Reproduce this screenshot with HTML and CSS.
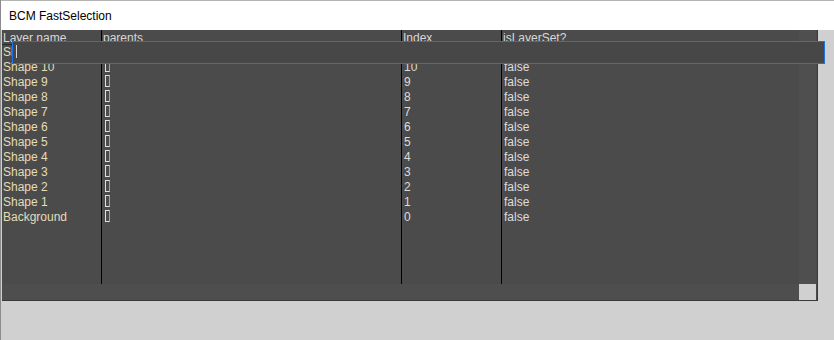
FILE: index.html
```html
<!DOCTYPE html>
<html lang="en">

<head>
    <meta charset="UTF-8">
    <title>BCM FastSelection</title>
    <link rel="stylesheet" href="styles.css">
</head>

<body>
    <div class="window">
        <div class="titlebar">BCM FastSelection</div>

        <div class="panel">
            <div class="grid">
                <div class="col col-name">
                    <div class="head">Layer name</div>
                    <div class="cell">Shape 11</div>
                    <div class="cell">Shape 10</div>
                    <div class="cell">Shape 9</div>
                    <div class="cell">Shape 8</div>
                    <div class="cell">Shape 7</div>
                    <div class="cell">Shape 6</div>
                    <div class="cell">Shape 5</div>
                    <div class="cell">Shape 4</div>
                    <div class="cell">Shape 3</div>
                    <div class="cell">Shape 2</div>
                    <div class="cell">Shape 1</div>
                    <div class="cell">Background</div>
                </div>
                <div class="col col-parents">
                    <div class="head">parents</div>
                    <div class="cell"><span class="box"></span></div>
                    <div class="cell"><span class="box"></span></div>
                    <div class="cell"><span class="box"></span></div>
                    <div class="cell"><span class="box"></span></div>
                    <div class="cell"><span class="box"></span></div>
                    <div class="cell"><span class="box"></span></div>
                    <div class="cell"><span class="box"></span></div>
                    <div class="cell"><span class="box"></span></div>
                    <div class="cell"><span class="box"></span></div>
                    <div class="cell"><span class="box"></span></div>
                    <div class="cell"><span class="box"></span></div>
                    <div class="cell"><span class="box"></span></div>
                </div>
                <div class="col col-index">
                    <div class="head">Index</div>
                    <div class="cell">11</div>
                    <div class="cell">10</div>
                    <div class="cell">9</div>
                    <div class="cell">8</div>
                    <div class="cell">7</div>
                    <div class="cell">6</div>
                    <div class="cell">5</div>
                    <div class="cell">4</div>
                    <div class="cell">3</div>
                    <div class="cell">2</div>
                    <div class="cell">1</div>
                    <div class="cell">0</div>
                </div>
                <div class="col col-set">
                    <div class="head">isLayerSet?</div>
                    <div class="cell">false</div>
                    <div class="cell">false</div>
                    <div class="cell">false</div>
                    <div class="cell">false</div>
                    <div class="cell">false</div>
                    <div class="cell">false</div>
                    <div class="cell">false</div>
                    <div class="cell">false</div>
                    <div class="cell">false</div>
                    <div class="cell">false</div>
                    <div class="cell">false</div>
                    <div class="cell">false</div>
                </div>
            </div>
            <div class="vscroll"></div>
            <div class="hscroll"></div>
            <div class="corner"></div>
        </div>

        <div class="search"><span class="caret"></span></div>
    </div>
</body>

</html>
```

FILE: styles.css
```css
body {
    margin: 0;
    background-color: #d0d0d0;
    font-family: "Liberation Sans", Arial, sans-serif;
    font-size: 12px;
}

.window {
    position: relative;
    width: 834px;
    height: 340px;
    border-left: 1px solid #8c8c8c;
    box-sizing: border-box;
    overflow: hidden;
}

.titlebar {
    height: 28px;
    padding-top: 1px;
    line-height: 29px;
    padding-left: 8px;
    background-color: #fff;
    border-top: 1px solid #b4b4b4;
    color: #000;
}

.panel {
    display: grid;
    grid-template-columns: 797px 17px;
    grid-template-rows: 254px 16px;
    width: 815px;
    margin-left: 1px;
    background-color: #4b4b4b;
    border-right: 1px solid #3a3a3a;
    border-bottom: 1px solid #3a3a3a;
}

.grid {
    display: flex;
    overflow: hidden;
}

.col {
    border-right: 1px solid #000;
}

.col-name {
    width: 99px;
    color: #e4ddb6;
}

.col-parents {
    width: 299px;
}

.col-index {
    width: 99px;
    color: #dcdcdc;
}

.col-set {
    flex: 1;
    border-right: none;
    color: #dcdcdc;
}

.head {
    height: 14px;
    line-height: 16px;
    padding-left: 1px;
    color: #d8d8d8;
    border-bottom: 1px solid #2a2a2a;
    overflow: hidden;
}

.cell {
    height: 15px;
    line-height: 15px;
    padding-left: 1px;
    white-space: nowrap;
}

.col-index .cell,
.col-set .cell {
    padding-left: 2px;
}

.box {
    display: inline-block;
    width: 3px;
    height: 10px;
    margin-left: 2px;
    vertical-align: -1px;
    border: 1px solid #e0e0e0;
    border-right-color: #b89a8c;
}

.vscroll {
    background-color: #4f4f4f;
}

.hscroll {
    background-color: #4e4e4e;
}

.corner {
    background-color: #d0d0d0;
}

.search {
    position: absolute;
    left: 11px;
    top: 41px;
    width: 811px;
    height: 21px;
    background-color: #474747;
    border: 1px solid #1e72e6;
}

.caret {
    position: absolute;
    left: 3px;
    top: 3px;
    width: 1px;
    height: 13px;
    background-color: #d8d8d8;
}
```
